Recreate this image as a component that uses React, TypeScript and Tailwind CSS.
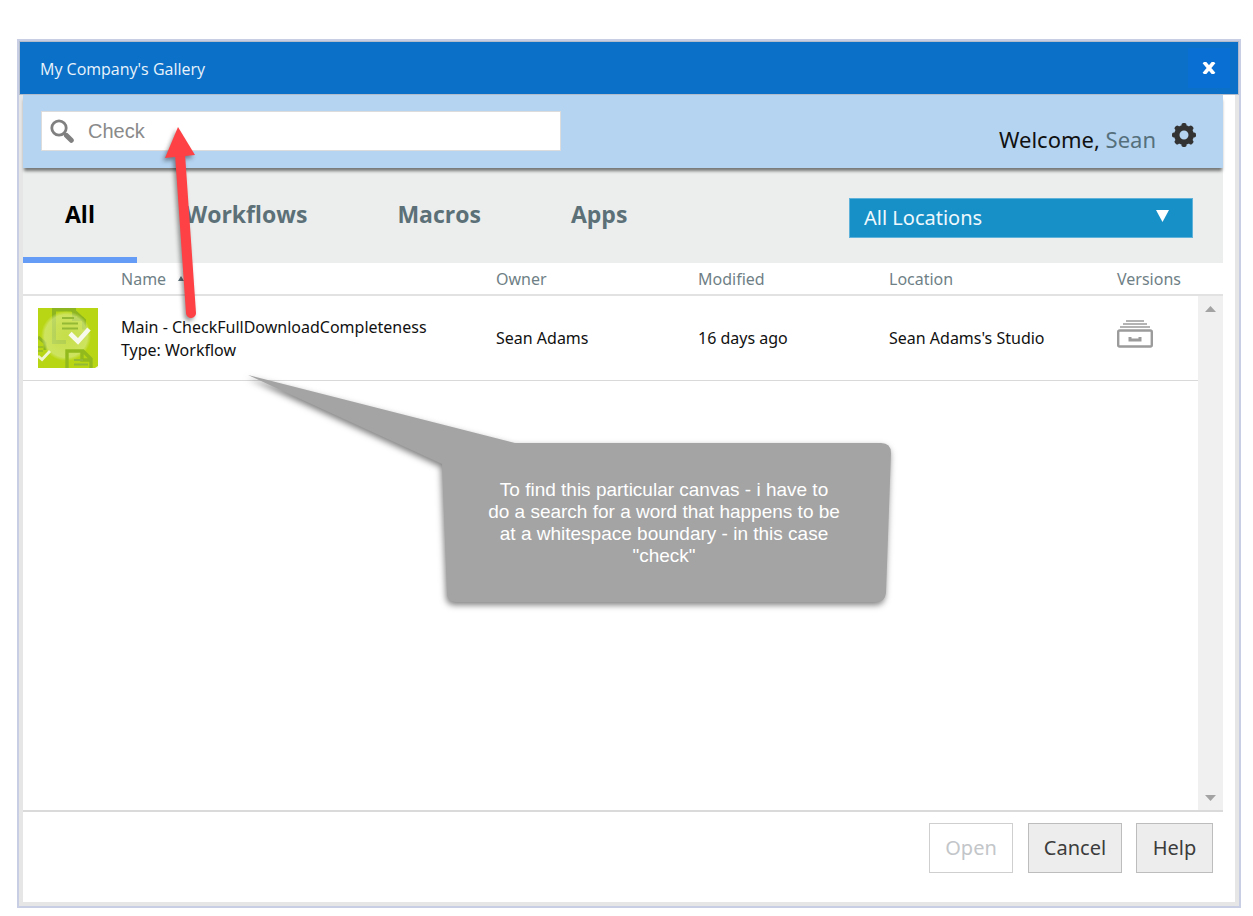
import React, { useState } from 'react';

const tabs = ['All', 'Workflows', 'Macros', 'Apps'];

const items = [
  {
    name: 'Main - CheckFullDownloadCompleteness',
    type: 'Workflow',
    owner: 'Sean Adams',
    modified: '16 days ago',
    location: "Sean Adams's Studio",
  },
];

const SearchIcon: React.FC = () => (
  <svg className="w-6 h-6 shrink-0" viewBox="0 0 24 24" fill="none" stroke="#808080" aria-hidden="true">
    <circle cx="9" cy="9" r="7.2" strokeWidth="2.8" />
    <path d="M14 14.5l2.2 2.2" strokeWidth="3" />
    <path d="M16.5 16.5l4.8 4.8" strokeWidth="5" strokeLinecap="round" />
  </svg>
);

const GearIcon: React.FC = () => (
  <svg className="w-6 h-6" viewBox="0 0 24 24" fill="#333333" aria-hidden="true">
    <circle cx="12" cy="12" r="7.2" fill="none" stroke="#333333" strokeWidth="5.4" />
    {[0, 45, 90, 135, 180, 225, 270, 315].map(angle => (
      <rect key={angle} x="9.5" y="0" width="5" height="5" rx="1.8" transform={`rotate(${angle} 12 12)`} />
    ))}
  </svg>
);

const VersionsIcon: React.FC = () => (
  <svg className="w-9 h-7" viewBox="0 0 36 28" fill="none" stroke="#9b9b9b" aria-hidden="true">
    <path d="M9 1h18M6 4h24M3 7h30" strokeWidth="1.6" />
    <rect x="1.2" y="10.5" width="33.6" height="16" rx="1.5" strokeWidth="2.4" />
    <path d="M13 17v3h10v-3" strokeWidth="3" />
  </svg>
);

const WorkflowThumb: React.FC = () => (
  <svg className="w-[60px] h-[60px]" viewBox="0 0 60 60" fill="none" aria-hidden="true">
    <defs>
      <radialGradient id="glow" cx="50%" cy="50%" r="50%">
        <stop offset="0" stopColor="#d3e67c" stopOpacity="0.5" />
        <stop offset="0.85" stopColor="#d8eb88" stopOpacity="0.65" />
        <stop offset="1" stopColor="#d8eb88" stopOpacity="0" />
      </radialGradient>
    </defs>
    <rect width="60" height="60" fill="#b9d615" />
    <path d="M16 0v34h12M14 1.5h20l12 11v9M36 0v11h10" stroke="#8cb51f" strokeWidth="4" />
    <path d="M0 29l7 6v7" stroke="#8cb51f" strokeWidth="3" />
    <path d="M0 39h5M0 43h5" stroke="#9cbf25" strokeWidth="2" />
    <circle cx="28" cy="28" r="25" fill="url(#glow)" />
    <path d="M29 60V43h16l8 8v9M44 43v9h9" stroke="#93ba1d" strokeWidth="3.4" />
    <path d="M24 10h12M24 15.5h16M24 20.5h16M36 52h9M36 56.5h14" stroke="#94b934" strokeWidth="2.2" />
    <path d="M32 25.5l8 8L51 21" stroke="#f7faeb" strokeWidth="4.6" />
    <path d="M0 48l4 3.5L12 43" stroke="#f0f6d2" strokeWidth="2.8" />
    <path d="M57 60l3-2v2z" fill="#f7faeb" />
  </svg>
);

const Arrow: React.FC = () => (
  <svg
    className="absolute left-[155px] top-[120px] w-[60px] h-[210px] pointer-events-none drop-shadow-[-2px_3px_2px_rgba(0,0,0,0.4)]"
    viewBox="0 0 60 210"
    aria-hidden="true"
  >
    <path d="M25 34L36 193" stroke="#fd4144" strokeWidth="10" strokeLinecap="round" />
    <path d="M23 7L40 35L10 38z" fill="#fd4144" />
  </svg>
);

const Callout: React.FC = () => (
  <div className="absolute left-[240px] top-[368px] w-[660px] h-[245px]">
    <svg
      className="absolute inset-0 drop-shadow-[-1px_3px_3px_rgba(0,0,0,0.5)]"
      viewBox="0 0 660 245"
      aria-hidden="true"
    >
      <path
        d="M8 7L275 75H641Q651 75 651 85L646 225Q645 234 636 234H216Q207 234 207 225L202 96z"
        fill="#a4a4a4"
      />
    </svg>
    <p className="relative mt-[111px] ml-[244px] w-[360px] text-center text-white text-[19px] leading-[22px] font-['Liberation_Sans',sans-serif]">
      To find this particular canvas - i have to
      <br />
      do a search for a word that happens to be
      <br />
      at a whitespace boundary - in this case
      <br />
      "check"
    </p>
  </div>
);

const App: React.FC = () => {
  const [query, setQuery] = useState('Check');
  const [activeTab, setActiveTab] = useState('All');

  return (
    <div className="relative min-h-screen flex flex-col bg-white pt-[39px] pb-2 pl-[17px] pr-3 font-['Noto_Sans',sans-serif] text-[#111111]">
      <div className="flex-1 flex flex-col border-2 border-[#c8cfe4] bg-[#e6e6e6]">
        {/* Title bar */}
        <header className="flex items-center justify-between border border-[#b3bccb] bg-[#0b70c7] h-[54px] pl-5 pr-2">
          <h1 className="pt-px text-base text-[#e9f3fc] font-['Open_Sans',sans-serif]">My Company's Gallery</h1>
          <button aria-label="Close" className="w-[42px] h-10 flex items-center justify-center bg-[#0a6fd2]">
            <svg className="w-[14px] h-3" viewBox="0 0 14 12" stroke="#ffffff" strokeWidth="3.6" aria-hidden="true">
              <path d="M2 0l10 12M12 0L2 12" />
            </svg>
          </button>
        </header>

        {/* Content */}
        <div className="flex-1 flex flex-col bg-white mx-1 mb-1">
          <div className="flex-1 flex flex-col mr-3">
            <div className="relative flex justify-between h-[73px] bg-[#b5d4f1] pl-[18px] pr-[27px] shadow-[0_4px_3px_-1px_rgba(0,0,0,0.5)]">
              <label className="mt-4 flex items-center w-[520px] h-10 bg-white border border-[#dcdcdc] pl-2 gap-[14px]">
                <SearchIcon />
                <input
                  aria-label="Search"
                  value={query}
                  onChange={e => setQuery(e.target.value)}
                  className="flex-1 min-w-0 outline-none text-xl text-[#8a8a8a] font-['Liberation_Sans',sans-serif]"
                />
              </label>
              <div className="flex items-start gap-4 pt-7">
                <p className="text-[22px] leading-8">
                  Welcome, <a href="#profile" className="text-[#55707c]">Sean</a>
                </p>
                <button aria-label="Settings">
                  <GearIcon />
                </button>
              </div>
            </div>

            {/* Tabs */}
            <div className="flex items-start justify-between bg-[#ebeeed] h-[95px] pr-[30px]">
              <nav className="flex gap-1.5 h-full">
                {tabs.map(tab => (
                  <button
                    key={tab}
                    onClick={() => setActiveTab(tab)}
                    className={`px-[42px] pt-1 border-b-[6px] text-[23px] font-bold font-['Open_Sans',sans-serif] ${
                      activeTab === tab ? 'border-[#659cf5] text-black' : 'border-transparent text-[#5c7078]'
                    }`}
                  >
                    {tab}
                  </button>
                ))}
              </nav>
              <div className="relative mt-[30px]">
                <select
                  aria-label="Location"
                  className="appearance-none w-[344px] h-10 pl-[14px] bg-[#1690c7] border border-[#5fb2d9] text-xl text-[#eff8fc]"
                >
                  <option>All Locations</option>
                </select>
                <svg
                  className="absolute right-6 top-3 w-[13px] h-3 pointer-events-none"
                  viewBox="0 0 13 12"
                  fill="#ffffff"
                  aria-hidden="true"
                >
                  <path d="M0 0h13L6.5 12z" />
                </svg>
              </div>
            </div>

            {/* List */}
            <div className="flex-1 flex border-b-2 border-[#dadada]">
              <div className="flex-1">
                <table className="w-full table-fixed text-left">
                  <colgroup>
                    <col className="w-[98px]" />
                    <col />
                    <col className="w-[202px]" />
                    <col className="w-[191px]" />
                    <col className="w-[228px]" />
                    <col className="w-[81px]" />
                  </colgroup>
                  <thead>
                    <tr className="h-8 border-b-2 border-[#e2e2e2] text-base text-[#6f7f86] leading-6">
                      <th></th>
                      <th className="font-normal">
                        <span className="flex items-center gap-3">
                          Name
                          <svg className="w-[6px] h-[5px]" viewBox="0 0 6 5" fill="#5c7078" aria-hidden="true">
                            <path d="M3 0l3 5H0z" />
                          </svg>
                        </span>
                      </th>
                      <th className="font-normal">Owner</th>
                      <th className="font-normal">Modified</th>
                      <th className="font-normal">Location</th>
                      <th className="font-normal">Versions</th>
                    </tr>
                  </thead>
                  <tbody>
                    {items.map(item => (
                      <tr key={item.name} className="h-[85px] border-b border-[#d9d9d9] text-base leading-[23px]">
                        <td className="pl-[15px]">
                          <WorkflowThumb />
                        </td>
                        <td className="pt-0.5 whitespace-nowrap">
                          {item.name}
                          <br />
                          Type: {item.type}
                        </td>
                        <td className="pt-0.5">{item.owner}</td>
                        <td className="pt-0.5">{item.modified}</td>
                        <td className="pt-0.5">{item.location}</td>
                        <td>
                          <button aria-label="Show versions" className="block pb-2">
                            <VersionsIcon />
                          </button>
                        </td>
                      </tr>
                    ))}
                  </tbody>
                </table>
              </div>
              <div className="w-[25px] flex flex-col">
                <div className="h-[33px] border-b-2 border-[#e2e2e2]" />
                <div className="flex-1 flex flex-col items-center justify-between bg-[#f0f0f0] pt-[10px] pb-[9px]">
                  <svg className="w-[11px] h-[6px]" viewBox="0 0 11 6" fill="#a3a3a3" aria-hidden="true">
                    <path d="M5.5 0L11 6H0z" />
                  </svg>
                  <svg className="w-[11px] h-[6px]" viewBox="0 0 11 6" fill="#a3a3a3" aria-hidden="true">
                    <path d="M0 0h11L5.5 6z" />
                  </svg>
                </div>
              </div>
            </div>

            {/* Actions */}
            <footer className="flex justify-end h-[90px] pt-[11px] pr-[10px] text-xl text-[#3c3c3c]">
              <button disabled className="w-[84px] h-[50px] border border-[#cfcfcf] bg-white text-[#c3c6c9]">
                Open
              </button>
              <button className="w-[94px] h-[50px] ml-[15px] border border-[#bdbdbd] bg-[#ededed]">Cancel</button>
              <button className="w-[77px] h-[50px] ml-[14px] border border-[#bdbdbd] bg-[#ededed]">Help</button>
            </footer>
          </div>
        </div>
      </div>

      <Callout />
      <Arrow />
    </div>
  );
};

export default App;
